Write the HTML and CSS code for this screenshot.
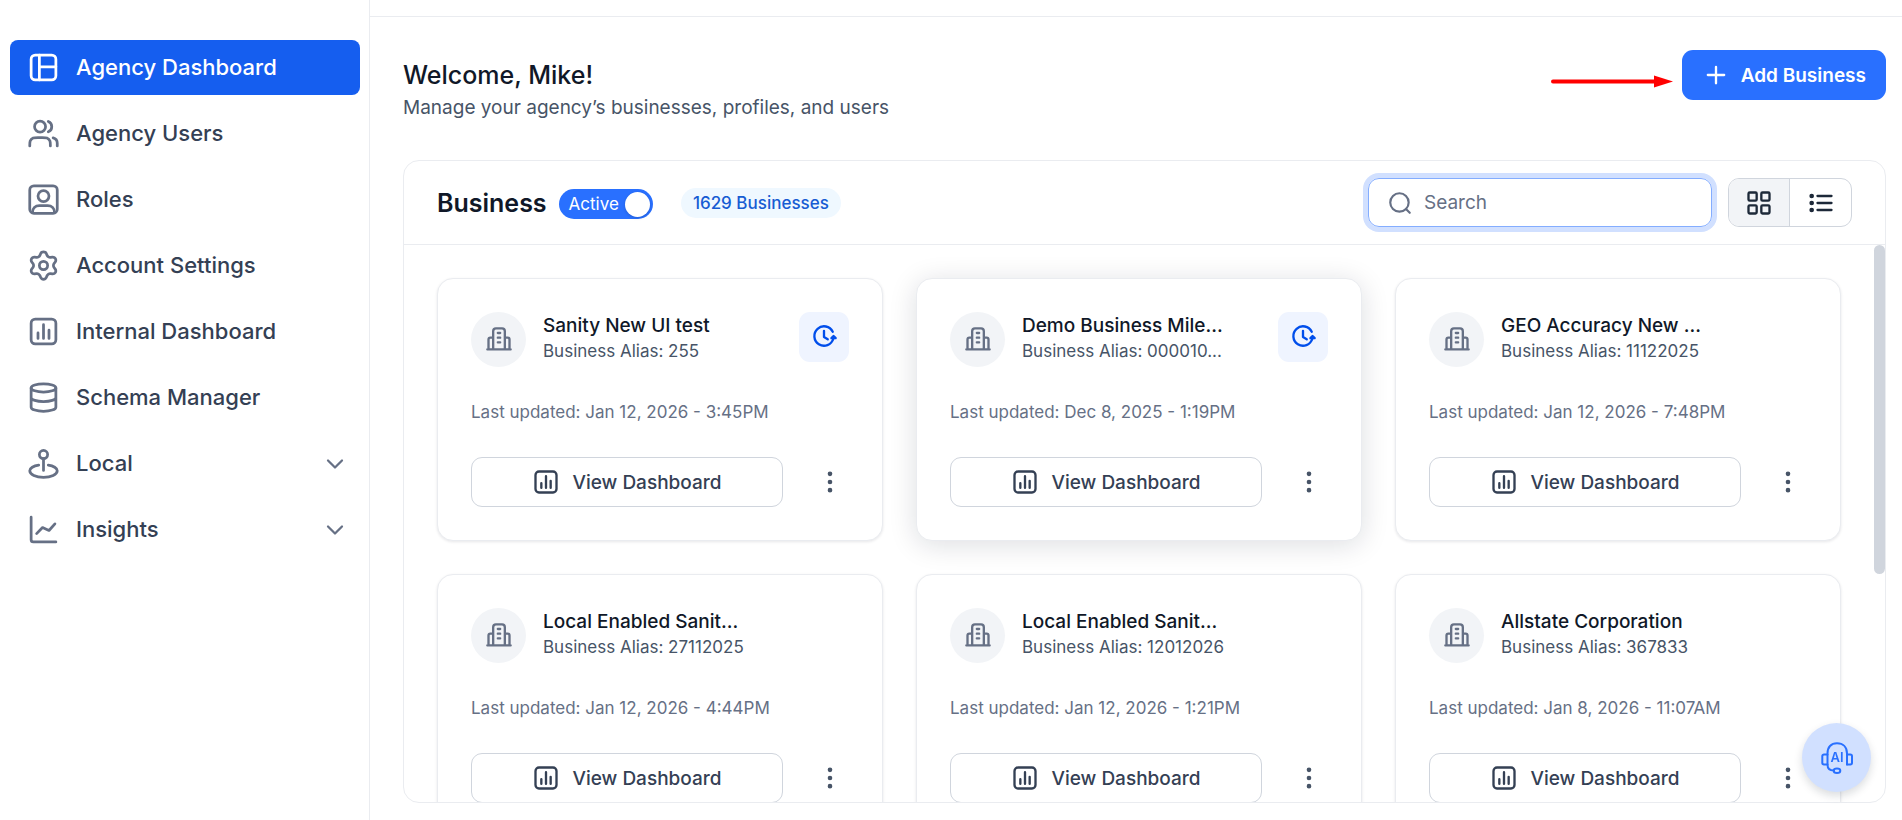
FILE: index.html
```html
<!DOCTYPE html>
<html lang="en">
<head>
    <meta charset="UTF-8">
    <meta name="viewport" content="width=device-width, initial-scale=1.0">
    <title>Agency Dashboard</title>
    <link rel="stylesheet" href="styles.css">
</head>
<body>
    <!-- shared icons -->
    <svg class="sprite" aria-hidden="true">
        <symbol id="i-layout" viewBox="0 0 24 24"><rect x="3" y="3" width="18" height="18" rx="3"/><path d="M9 3v18M9 11.5h12"/></symbol>
        <symbol id="i-users" viewBox="0 0 24 24"><path d="M22 21V19C22 17.1362 20.7252 15.5701 19 15.126M15.5 3.29076C16.9659 3.88415 18 5.32131 18 7C18 8.67869 16.9659 10.1159 15.5 10.7092M17 21C17 19.1362 17 18.2044 16.6955 17.4693C16.2895 16.4892 15.5108 15.7105 14.5307 15.3045C13.7956 15 12.8638 15 11 15H8C6.13623 15 5.20435 15 4.46927 15.3045C3.48915 15.7105 2.71046 16.4892 2.30448 17.4693C2 18.2044 2 19.1362 2 21M13.5 7C13.5 9.20914 11.7091 11 9.5 11C7.29086 11 5.5 9.20914 5.5 7C5.5 4.79086 7.29086 3 9.5 3C11.7091 3 13.5 4.79086 13.5 7Z"/></symbol>
        <symbol id="i-role" viewBox="0 0 24 24"><rect x="2" y="2" width="20" height="20" rx="3"/><circle cx="12" cy="9.5" r="4"/><path d="M4 21.5C4 18.5 6 16.5 9 16.5h6c3 0 5 2 5 5"/></symbol>
        <symbol id="i-settings" viewBox="0 0 24 24"><path d="M9.3951 19.3711L9.97955 20.6856C10.1533 21.0768 10.4368 21.4093 10.7957 21.6426C11.1547 21.8759 11.5736 22.0001 12.0018 22C12.4299 22.0001 12.8488 21.8759 13.2078 21.6426C13.5667 21.4093 13.8502 21.0768 14.024 20.6856L14.6084 19.3711C14.8165 18.9047 15.1664 18.5159 15.6084 18.26C16.0532 18.0034 16.5678 17.8941 17.0784 17.9478L18.5084 18.1C18.9341 18.145 19.3637 18.0656 19.7451 17.8713C20.1265 17.6771 20.4434 17.3763 20.6573 17.0056C20.8715 16.635 20.9735 16.2103 20.9511 15.7829C20.9286 15.3555 20.7825 14.9438 20.5307 14.5978L19.684 13.4344C19.3825 13.0171 19.2214 12.5148 19.224 12C19.2239 11.4866 19.3865 10.9864 19.6884 10.5711L20.5351 9.40778C20.787 9.06175 20.933 8.65007 20.9555 8.22267C20.978 7.79528 20.8759 7.37054 20.6618 7C20.4479 6.62923 20.131 6.32849 19.7496 6.13423C19.3681 5.93997 18.9386 5.86053 18.5129 5.90556L17.0829 6.05778C16.5722 6.11141 16.0577 6.00212 15.6129 5.74556C15.17 5.48825 14.82 5.09736 14.6129 4.62889L14.024 3.31444C13.8502 2.92317 13.5667 2.59072 13.2078 2.3574C12.8488 2.12408 12.4299 1.99993 12.0018 2C11.5736 1.99993 11.1547 2.12408 10.7957 2.3574C10.4368 2.59072 10.1533 2.92317 9.97955 3.31444L9.3951 4.62889C9.18803 5.09736 8.83798 5.48825 8.3951 5.74556C7.95032 6.00212 7.43577 6.11141 6.9251 6.05778L5.49066 5.90556C5.06499 5.86053 4.6354 5.93997 4.25397 6.13423C3.87255 6.32849 3.55567 6.62923 3.34177 7C3.12759 7.37054 3.02555 7.79528 3.04804 8.22267C3.07052 8.65007 3.21656 9.06175 3.46844 9.40778L4.3151 10.5711C4.61704 10.9864 4.77964 11.4866 4.77955 12C4.77964 12.5134 4.61704 13.0137 4.3151 13.4289L3.46844 14.5922C3.21656 14.9382 3.07052 15.3499 3.04804 15.7773C3.02555 16.2047 3.12759 16.6295 3.34177 17C3.55589 17.3706 3.8728 17.6712 4.25417 17.8654C4.63554 18.0596 5.06502 18.1392 5.49066 18.0944L6.92066 17.9422C7.43133 17.8886 7.94587 17.9979 8.39066 18.2544C8.83519 18.511 9.18687 18.902 9.3951 19.3711Z"/><circle cx="12" cy="12" r="3"/></symbol>
        <symbol id="i-chart" viewBox="0 0 24 24"><rect x="3" y="3" width="18" height="18" rx="3"/><path d="M8 13v4M12 7v10M16 11v6"/></symbol>
        <symbol id="i-database" viewBox="0 0 24 24"><ellipse cx="12" cy="5" rx="9" ry="3"/><path d="M21 5v14c0 1.66-4 3-9 3s-9-1.34-9-3V5M21 12c0 1.66-4 3-9 3s-9-1.34-9-3"/></symbol>
        <symbol id="i-pin" viewBox="0 0 24 24"><circle cx="12" cy="5.5" r="3"/><path d="M12 8.5V17M8.5 13.2C4.7 13.7 2 15.4 2 17.3 2 20 6.5 22 12 22s10-2 10-4.7c0-1.9-2.7-3.6-6.5-4.1"/></symbol>
        <symbol id="i-line" viewBox="0 0 24 24"><path d="M21 21H4.6C3.5 21 3 20.5 3 19.4V3M7 15l4.3-4.4L16 12.7l4.3-4.8"/></symbol>
        <symbol id="i-chevron" viewBox="0 0 20 20"><path d="M5 7.5l5 5 5-5"/></symbol>
        <symbol id="i-building" viewBox="0 0 24 24"><path d="M2 20h20M7 20V4.400C7 2.800 7.800 2 9.400 2h5.200C16.200 2 17 2.800 17 4.400V20M7 10H4.600C3.600 10 3 10.600 3 11.600V20M17 10h2.400c1 0 1.600.6 1.600 1.600V20M11 6h2M11 10h2M11 14h2"/></symbol>
        <symbol id="i-clock" viewBox="0 0 24 24"><path d="M19.500 7.500A8.300 8.300 0 1 0 20 13.500M12 6.700V12l3.200 2"/><path class="solid" d="M18.400 13l1.800-1.800L22 13z"/></symbol>
        <symbol id="i-plus" viewBox="0 0 24 24"><path d="M12 5v14M5 12h14"/></symbol>
        <symbol id="i-search" viewBox="0 0 24 24"><circle cx="11.500" cy="11.500" r="8.500"/><path d="M21 21l-3.500-3.500"/></symbol>
        <symbol id="i-grid" viewBox="0 0 24 24"><rect x="3" y="3" width="7" height="7" rx="1"/><rect x="14" y="3" width="7" height="7" rx="1"/><rect x="3" y="14" width="7" height="7" rx="1"/><rect x="14" y="14" width="7" height="7" rx="1"/></symbol>
        <symbol id="i-list" viewBox="0 0 24 24"><path d="M9 6h12M9 12h12M9 18h12"/><path class="dots" d="M4 6h.01M4 12h.01M4 18h.01"/></symbol>
        <symbol id="i-more" viewBox="0 0 24 24"><circle class="solid" cx="12" cy="5" r="1"/><circle class="solid" cx="12" cy="12" r="1"/><circle class="solid" cx="12" cy="19" r="1"/></symbol>
    </svg>

    <div class="app">
        <aside class="sidebar">
            <nav class="nav">
                <a href="#" class="nav-item active"><svg class="icon"><use href="#i-layout"/></svg><span>Agency Dashboard</span></a>
                <a href="#" class="nav-item"><svg class="icon"><use href="#i-users"/></svg><span>Agency Users</span></a>
                <a href="#" class="nav-item"><svg class="icon"><use href="#i-role"/></svg><span>Roles</span></a>
                <a href="#" class="nav-item"><svg class="icon"><use href="#i-settings"/></svg><span>Account Settings</span></a>
                <a href="#" class="nav-item"><svg class="icon"><use href="#i-chart"/></svg><span>Internal Dashboard</span></a>
                <a href="#" class="nav-item"><svg class="icon"><use href="#i-database"/></svg><span>Schema Manager</span></a>
                <a href="#" class="nav-item"><svg class="icon"><use href="#i-pin"/></svg><span>Local</span><svg class="icon chevron"><use href="#i-chevron"/></svg></a>
                <a href="#" class="nav-item"><svg class="icon"><use href="#i-line"/></svg><span>Insights</span><svg class="icon chevron"><use href="#i-chevron"/></svg></a>
            </nav>
        </aside>

        <main class="main">
            <header class="page-header">
                <div class="welcome">
                    <h1>Welcome, Mike!</h1>
                    <p>Manage your agency’s businesses, profiles, and users</p>
                </div>
                <div class="page-actions">
                    <svg class="arrow" viewBox="0 0 122 50" aria-hidden="true"><path d="M2 31.500h102" stroke="#f00" stroke-width="4" stroke-linecap="round"/><path d="M103 25.500l19 6-19 6z" fill="#f00"/></svg>
                    <button class="btn-primary"><svg class="icon"><use href="#i-plus"/></svg>Add Business</button>
                </div>
            </header>

            <section class="panel">
                <div class="panel-header">
                    <h2>Business</h2>
                    <label class="switch">Active<input type="checkbox" role="switch" checked></label>
                    <span class="count">1629 Businesses</span>
                    <label class="search">
                        <svg class="icon"><use href="#i-search"/></svg>
                        <input type="text" placeholder="Search" aria-label="Search">
                    </label>
                    <div class="view-toggle">
                        <button class="selected" aria-label="Grid view"><svg class="icon"><use href="#i-grid"/></svg></button>
                        <button aria-label="List view"><svg class="icon"><use href="#i-list"/></svg></button>
                    </div>
                </div>

                <div class="panel-body">
                    <div class="cards">
                        <article class="card">
                            <div class="card-top">
                                <div class="avatar"><svg class="icon"><use href="#i-building"/></svg></div>
                                <div class="card-name">
                                    <h3>Sanity New UI test</h3>
                                    <p>Business Alias: 255</p>
                                </div>
                                <button class="btn-clock" aria-label="Pending updates"><svg class="icon"><use href="#i-clock"/></svg></button>
                            </div>
                            <p class="updated">Last updated: Jan 12, 2026 - 3:45PM</p>
                            <div class="card-actions">
                                <button class="btn-view"><svg class="icon"><use href="#i-chart"/></svg>View Dashboard</button>
                                <button class="btn-more" aria-label="More"><svg class="icon"><use href="#i-more"/></svg></button>
                            </div>
                        </article>

                        <article class="card raised">
                            <div class="card-top">
                                <div class="avatar"><svg class="icon"><use href="#i-building"/></svg></div>
                                <div class="card-name">
                                    <h3>Demo Business Mile...</h3>
                                    <p>Business Alias: 000010...</p>
                                </div>
                                <button class="btn-clock" aria-label="Pending updates"><svg class="icon"><use href="#i-clock"/></svg></button>
                            </div>
                            <p class="updated">Last updated: Dec 8, 2025 - 1:19PM</p>
                            <div class="card-actions">
                                <button class="btn-view"><svg class="icon"><use href="#i-chart"/></svg>View Dashboard</button>
                                <button class="btn-more" aria-label="More"><svg class="icon"><use href="#i-more"/></svg></button>
                            </div>
                        </article>

                        <article class="card">
                            <div class="card-top">
                                <div class="avatar"><svg class="icon"><use href="#i-building"/></svg></div>
                                <div class="card-name">
                                    <h3>GEO Accuracy New ...</h3>
                                    <p>Business Alias: 11122025</p>
                                </div>
                            </div>
                            <p class="updated">Last updated: Jan 12, 2026 - 7:48PM</p>
                            <div class="card-actions">
                                <button class="btn-view"><svg class="icon"><use href="#i-chart"/></svg>View Dashboard</button>
                                <button class="btn-more" aria-label="More"><svg class="icon"><use href="#i-more"/></svg></button>
                            </div>
                        </article>

                        <article class="card">
                            <div class="card-top">
                                <div class="avatar"><svg class="icon"><use href="#i-building"/></svg></div>
                                <div class="card-name">
                                    <h3>Local Enabled Sanit...</h3>
                                    <p>Business Alias: 27112025</p>
                                </div>
                            </div>
                            <p class="updated">Last updated: Jan 12, 2026 - 4:44PM</p>
                            <div class="card-actions">
                                <button class="btn-view"><svg class="icon"><use href="#i-chart"/></svg>View Dashboard</button>
                                <button class="btn-more" aria-label="More"><svg class="icon"><use href="#i-more"/></svg></button>
                            </div>
                        </article>

                        <article class="card">
                            <div class="card-top">
                                <div class="avatar"><svg class="icon"><use href="#i-building"/></svg></div>
                                <div class="card-name">
                                    <h3>Local Enabled Sanit...</h3>
                                    <p>Business Alias: 12012026</p>
                                </div>
                            </div>
                            <p class="updated">Last updated: Jan 12, 2026 - 1:21PM</p>
                            <div class="card-actions">
                                <button class="btn-view"><svg class="icon"><use href="#i-chart"/></svg>View Dashboard</button>
                                <button class="btn-more" aria-label="More"><svg class="icon"><use href="#i-more"/></svg></button>
                            </div>
                        </article>

                        <article class="card">
                            <div class="card-top">
                                <div class="avatar"><svg class="icon"><use href="#i-building"/></svg></div>
                                <div class="card-name">
                                    <h3>Allstate Corporation</h3>
                                    <p>Business Alias: 367833</p>
                                </div>
                            </div>
                            <p class="updated">Last updated: Jan 8, 2026 - 11:07AM</p>
                            <div class="card-actions">
                                <button class="btn-view"><svg class="icon"><use href="#i-chart"/></svg>View Dashboard</button>
                                <button class="btn-more" aria-label="More"><svg class="icon"><use href="#i-more"/></svg></button>
                            </div>
                        </article>
                    </div>
                    <div class="scrollbar"><div class="thumb"></div></div>
                </div>
            </section>
        </main>
    </div>

    <button class="assistant" aria-label="AI assistant">
        <svg viewBox="0 0 32 32" width="32" height="32">
            <path d="M6.500 22.500V11.500C6.500 5 10 1.300 16 1.300S26 5 26 11.500v11M6.500 22.500c0 3.600 2.200 6 6.200 6"/>
            <path d="M6.500 12.500H3a1.700 1.700 0 0 0-1.700 1.700v6.600A1.700 1.700 0 0 0 3 22.500h3.500M26 12.500h3.300a1.700 1.700 0 0 1 1.700 1.700v6.600a1.700 1.700 0 0 1-1.700 1.700H26"/>
            <ellipse cx="16" cy="28.700" rx="3.300" ry="2.200"/>
            <text x="16" y="20" text-anchor="middle">AI</text>
        </svg>
    </button>
</body>
</html>
```
FILE: styles.css
```css
* {
    box-sizing: border-box;
}
body {
    margin: 0;
    font-family: Inter, "Liberation Sans", sans-serif;
    font-size: 19px;
    color: #101828;
    background-color: #fff;
}
h1, h2, h3, p {
    margin: 0;
}
button {
    display: flex;
    align-items: center;
    justify-content: center;
    padding: 0;
    border: none;
    background: none;
    font: inherit;
    font-weight: 500;
    cursor: pointer;
}
.sprite {
    display: none;
}
.icon {
    flex: none;
    width: 28px;
    height: 28px;
    fill: none;
    stroke: currentColor;
    stroke-width: 2;
    stroke-linecap: round;
    stroke-linejoin: round;
}
.solid {
    fill: currentColor;
}
.dots {
    stroke-width: 4;
}
.app {
    display: flex;
    height: 100vh;
}

/* sidebar */
.sidebar {
    flex: none;
    width: 370px;
    padding: 40px 9px 0 10px;
    border-right: 1px solid #eaecf0;
}
.nav {
    display: flex;
    flex-direction: column;
    gap: 11px;
}
.nav-item {
    display: flex;
    align-items: center;
    gap: 16px;
    height: 55px;
    padding: 0 11px 0 17px;
    border-radius: 8px;
    color: #344054;
    font-size: 22px;
    font-weight: 500;
    text-decoration: none;
}
.nav-item span {
    padding-bottom: 2px;
}
.nav-item .icon {
    width: 33px;
    height: 33px;
    color: #667085;
}
.nav-item .chevron {
    width: 28px;
    height: 28px;
    margin-left: auto;
    stroke-width: 1.6;
}
.nav-item.active,
.nav-item.active .icon {
    color: #fff;
}
.nav-item.active {
    background-color: #155eef;
}

/* main column */
.main {
    flex: 1;
    min-width: 0;
    display: flex;
    flex-direction: column;
    gap: 33px;
    margin-top: 16px;
    padding: 33px 16px 17px 33px;
    border-top: 1px solid #eaecf0;
}
.page-header {
    display: flex;
    justify-content: space-between;
    align-items: flex-start;
}
.welcome {
    padding: 6px 0 5px;
}
.welcome h1 {
    font-size: 25px;
    font-weight: 500;
    line-height: 38px;
}
.welcome p {
    color: #475467;
    line-height: 28px;
}
.page-actions {
    display: flex;
    gap: 9px;
}
.arrow {
    width: 122px;
    height: 50px;
}
.btn-primary {
    gap: 11px;
    height: 50px;
    padding: 0 20px;
    border-radius: 11px;
    background-color: #2970ff;
    color: #fff;
    font-weight: 600;
}

/* panel */
.panel {
    flex: 1;
    min-height: 0;
    display: flex;
    flex-direction: column;
    border: 1px solid #eaecf0;
    border-radius: 16px;
    overflow: hidden;
}
.panel-header {
    display: flex;
    align-items: center;
    padding: 17px 33px;
    border-bottom: 1px solid #eaecf0;
}
.panel-header h2 {
    font-size: 25px;
    font-weight: 600;
}
.switch {
    display: flex;
    align-items: center;
    gap: 6px;
    height: 30px;
    margin: 3px 28px 0 12px;
    padding: 0 3px 0 10px;
    border-radius: 15px;
    background-color: #2970ff;
    color: #fff;
    font-size: 17px;
    font-weight: 400;
}
.switch input {
    appearance: none;
    width: 25px;
    height: 25px;
    margin: 0;
    border-radius: 50%;
    background-color: #fff;
    box-shadow: 0 1px 3px rgba(16, 24, 40, 0.2);
}
.count {
    padding: 0 12px;
    border-radius: 15px;
    background-color: #eff8ff;
    color: #175cd3;
    font-size: 17px;
    font-weight: 500;
    line-height: 30px;
}
.search {
    display: flex;
    align-items: center;
    gap: 9px;
    width: 344px;
    height: 49px;
    margin: 0 16px 0 auto;
    padding: 0 18px;
    border: 1px solid #84adff;
    border-radius: 11px;
    box-shadow: 0 0 0 5px #d1e0ff;
    color: #667085;
}
.search .icon {
    width: 26px;
    height: 26px;
}
.search input {
    flex: 1;
    min-width: 0;
    border: none;
    outline: none;
    background: none;
    font: inherit;
    color: #101828;
}
.search input::placeholder {
    color: #667085;
}
.view-toggle {
    display: flex;
    height: 49px;
    border: 1px solid #d0d5dd;
    border-radius: 11px;
    overflow: hidden;
}
.view-toggle button {
    width: 61px;
    color: #1d2939;
}
.view-toggle .selected {
    border-right: 1px solid #d0d5dd;
    background-color: #f2f4f7;
}
.panel-body {
    flex: 1;
    min-height: 0;
    display: flex;
}
.scrollbar {
    flex: none;
    width: 11px;
}
.thumb {
    height: 59%;
    border-radius: 6px;
    background-color: #d0d5dd;
}

/* business cards */
.cards {
    flex: 1;
    display: grid;
    grid-template-columns: repeat(3, 1fr);
    grid-auto-rows: max-content;
    gap: 33px;
    padding: 33px;
    overflow: hidden;
}
.card {
    padding: 33px;
    border: 1px solid #eaecf0;
    border-radius: 16px;
    background-color: #fff;
    box-shadow: 0 1px 3px rgba(16, 24, 40, 0.1);
}
.card.raised {
    box-shadow: 0 4px 28px rgba(16, 24, 40, 0.14);
}
.card-top {
    display: flex;
    align-items: flex-start;
}
.avatar {
    display: flex;
    align-items: center;
    justify-content: center;
    flex: none;
    width: 55px;
    height: 55px;
    margin-right: 17px;
    border-radius: 50%;
    background-color: #f2f4f7;
    color: #667085;
}
.card-name {
    flex: 1;
    min-width: 0;
    padding-top: 1px;
    white-space: nowrap;
}
.card-name h3 {
    font-size: 19px;
    font-weight: 500;
    line-height: 26px;
}
.card-name p {
    color: #475467;
    font-size: 17px;
    line-height: 24px;
}
.btn-clock {
    flex: none;
    width: 50px;
    height: 50px;
    border-radius: 11px;
    background-color: #eff4ff;
    color: #004eeb;
}
.updated {
    margin: 33px 0;
    color: #667085;
    font-size: 17px;
    line-height: 24px;
}
.card-actions {
    display: flex;
    gap: 28px;
}
.btn-view {
    flex: 1;
    gap: 12px;
    height: 50px;
    border: 1px solid #d0d5dd;
    border-radius: 11px;
    color: #344054;
}
.btn-more {
    width: 38px;
    color: #475467;
}

/* floating assistant */
.assistant {
    position: fixed;
    right: 31px;
    bottom: 28px;
    width: 69px;
    height: 69px;
    border-radius: 50%;
    background-color: #d1e0ff;
    box-shadow: 0 4px 8px rgba(16, 24, 40, 0.15);
}
.assistant svg {
    fill: none;
    stroke: #2970ff;
    stroke-width: 2;
    stroke-linecap: round;
}
.assistant text {
    fill: #2970ff;
    stroke: none;
    font-size: 13px;
    font-weight: 600;
}
```
